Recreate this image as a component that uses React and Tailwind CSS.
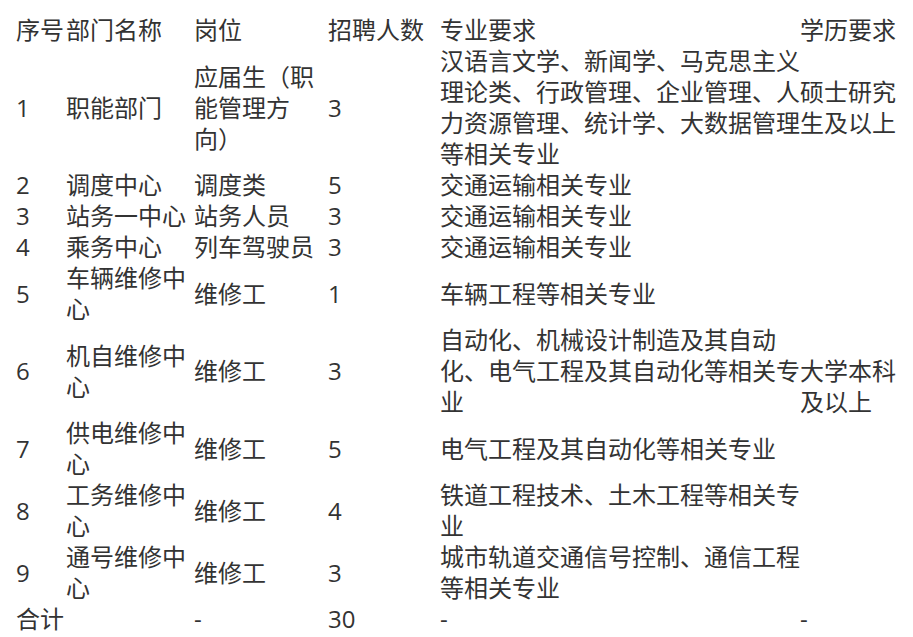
import React from "react";

const rows = [
  { no: "1", dept: "职能部门", pos: "应届生（职能管理方向）", num: "3", major: "汉语言文学、新闻学、马克思主义理论类、行政管理、企业管理、人力资源管理、统计学、大数据管理等相关专业", edu: "硕士研究生及以上" },
  { no: "2", dept: "调度中心", pos: "调度类", num: "5", major: "交通运输相关专业", edu: "大学本科及以上", span: 8 },
  { no: "3", dept: "站务一中心", pos: "站务人员", num: "3", major: "交通运输相关专业" },
  { no: "4", dept: "乘务中心", pos: "列车驾驶员", num: "3", major: "交通运输相关专业" },
  { no: "5", dept: "车辆维修中心", pos: "维修工", num: "1", major: "车辆工程等相关专业" },
  { no: "6", dept: "机自维修中心", pos: "维修工", num: "3", major: "自动化、机械设计制造及其自动化、电气工程及其自动化等相关专业" },
  { no: "7", dept: "供电维修中心", pos: "维修工", num: "5", major: "电气工程及其自动化等相关专业" },
  { no: "8", dept: "工务维修中心", pos: "维修工", num: "4", major: "铁道工程技术、土木工程等相关专业" },
  { no: "9", dept: "通号维修中心", pos: "维修工", num: "3", major: "城市轨道交通信号控制、通信工程等相关专业" },
];

export default function App() {
  return (
    <div
      className="bg-white px-4 pt-[14px] pb-4 text-[24px] leading-[31px] text-[#333333] [text-spacing-trim:space-all]"
      style={{ fontFamily: '"Open Sans", "Noto Sans CJK SC", sans-serif' }}
    >
      <table className="table-fixed border-collapse w-[881px]">
        <colgroup>
          <col className="w-[50px]" />
          <col className="w-[128px]" />
          <col className="w-[134px]" />
          <col className="w-[112px]" />
          <col className="w-[360px]" />
          <col className="w-[97px]" />
        </colgroup>
        <tbody>
          <tr>
            <td className="p-0 align-middle text-left">序号</td>
            <td className="p-0 align-middle text-left">部门名称</td>
            <td className="p-0 align-middle text-left">岗位</td>
            <td className="p-0 align-middle text-left">招聘人数</td>
            <td className="p-0 align-middle text-left">专业要求</td>
            <td className="p-0 align-middle text-left">学历要求</td>
          </tr>
          {rows.map((r) => (
            <tr key={r.no}>
              <td className="p-0 align-middle text-left">{r.no}</td>
              <td className="p-0 align-middle text-left">{r.dept}</td>
              <td className="p-0 align-middle text-left">{r.pos}</td>
              <td className="p-0 align-middle text-left">{r.num}</td>
              <td className="p-0 align-middle text-left">{r.major}</td>
              {r.edu ? (
                <td className="p-0 align-middle text-left" rowSpan={r.span || 1}>
                  {r.edu}
                </td>
              ) : null}
            </tr>
          ))}
          <tr>
            <td className="p-0 align-middle text-left" colSpan={2}>合计</td>
            <td className="p-0 align-middle text-left">-</td>
            <td className="p-0 align-middle text-left">30</td>
            <td className="p-0 align-middle text-left">-</td>
            <td className="p-0 align-middle text-left">-</td>
          </tr>
        </tbody>
      </table>
    </div>
  );
}
